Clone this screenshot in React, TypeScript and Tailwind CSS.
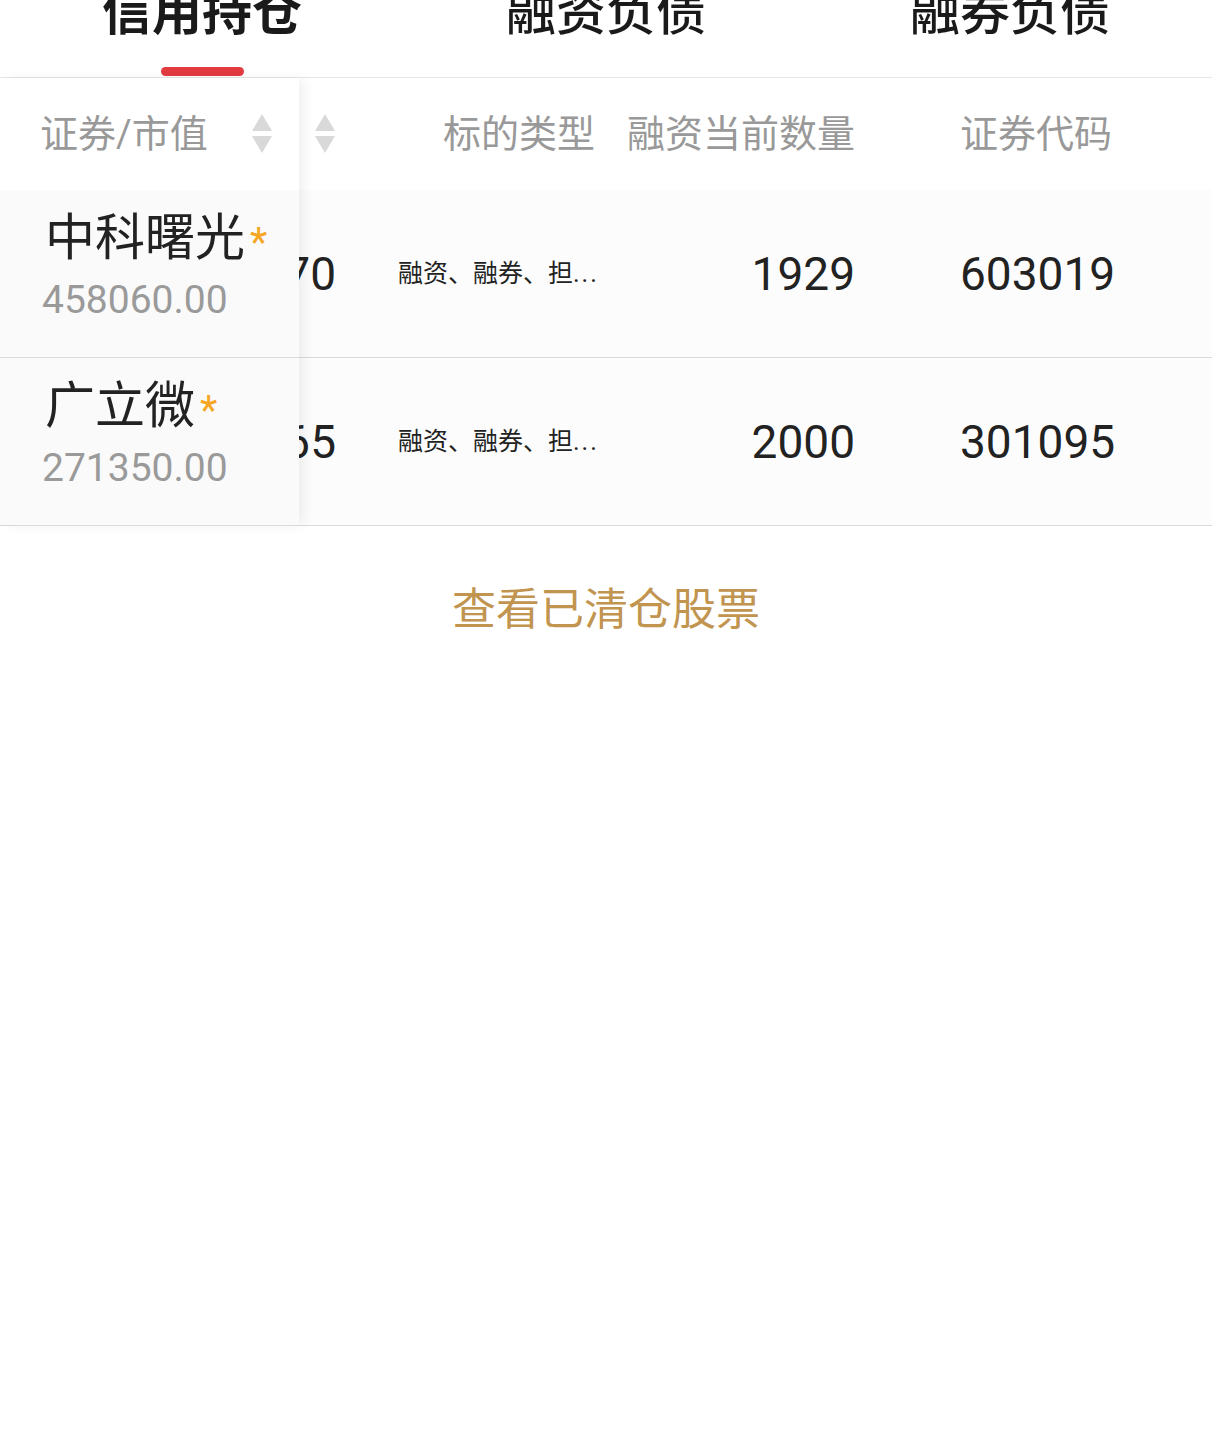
import React from "react";

function SortIcon() {
  return (
    <svg width="22" height="40" viewBox="0 0 22 40" className="shrink-0">
      <path d="M11 0 L21 17 L1 17 Z" fill="#d9d9d9" />
      <path d="M1 22 L21 22 L11 39 Z" fill="#d9d9d9" />
    </svg>
  );
}

const rows = [
  { name: "中科曙光", value: "458060.00", a: "1370", type: "融资、融券、担", qty: "1929", code: "603019" },
  { name: "广立微", value: "271350.00", a: "2665", type: "融资、融券、担", qty: "2000", code: "301095" },
];

export default function App() {
  return (
    <div className="w-[1212px] h-[1430px] bg-white overflow-hidden font-[Roboto,'Noto_Sans_CJK_SC',sans-serif] text-[#222]">
      {/* Tabs */}
      <div className="flex h-[78px] border-b border-[#e6e6e6]">
        <div className="flex-1 flex flex-col items-center justify-between">
          <div className="-mt-[12px] text-[50px] leading-[50px] font-bold text-[#1a1a1a]">信用持仓</div>
          <div className="w-[83px] h-[9px] rounded-full bg-[#e23b40] mb-[1px]" />
        </div>
        <div className="flex-1 flex flex-col items-center">
          <div className="-mt-[12px] text-[50px] leading-[50px] font-medium text-[#1a1a1a]">融资负债</div>
        </div>
        <div className="flex-1 flex flex-col items-center">
          <div className="-mt-[12px] text-[50px] leading-[50px] font-medium text-[#1a1a1a]">融券负债</div>
        </div>
      </div>

      {/* Table */}
      <div className="flex">
        {/* Frozen column */}
        <div className="w-[299px] shrink-0 relative z-10 shadow-[6px_0_12px_-2px_rgba(0,0,0,0.07)]">
          <div className="h-[112px] bg-white flex items-center pl-[40px]">
            <span className="text-[38px] leading-none text-[#999]">证券/市值</span>
            <span className="ml-[43px] flex"><SortIcon /></span>
          </div>
          {rows.map((r) => (
            <div key={r.name} className="h-[168px] bg-[#fafafa] border-b border-[#dadada] pt-[23px] pl-[45px]">
              <div className="flex items-start h-[50px]">
                <span className="text-[50px] leading-[50px] text-[#222]">{r.name}</span>
                <span className="ml-[5px] mt-[20px] text-[40px] leading-[20px] text-[#f5a623]">*</span>
              </div>
              <div className="-ml-[3px] mt-[17px] text-[39px] leading-[40px] text-[#9a9a9a]">{r.value}</div>
            </div>
          ))}
        </div>

        {/* Scrollable area */}
        <div className="flex-1 overflow-hidden">
          <div className="h-[112px] bg-white flex items-center text-[38px] leading-none text-[#999]">
            <div className="w-[37px] flex justify-end"><SortIcon /></div>
            <div className="w-[261px] flex justify-end pr-[2px]">标的类型</div>
            <div className="w-[258px] flex justify-end">融资当前数量</div>
            <div className="flex-1 pl-[105px]">证券代码</div>
          </div>
          {rows.map((r) => (
            <div key={r.code} className="h-[168px] bg-[#fcfcfc] border-b border-[#dadada] flex items-center">
              <div className="w-[37px] overflow-hidden flex justify-end">
                <span className="whitespace-nowrap text-[46px] leading-none text-[#222]">{r.a}</span>
              </div>
              <div className="w-[261px] pl-[62px] whitespace-nowrap text-[25px] leading-none text-[#222]">
                {r.type}
                <span className="tracking-[2px]">...</span>
              </div>
              <div className="w-[258px] flex justify-end text-[46px] leading-none text-[#222]">{r.qty}</div>
              <div className="flex-1 pl-[105px] text-[46px] leading-none text-[#222]">{r.code}</div>
            </div>
          ))}
        </div>
      </div>

      {/* Bottom link */}
      <div className="flex justify-center pt-[62px]">
        <span className="text-[44px] leading-[44px] text-[#c1944f]">查看已清仓股票</span>
      </div>
    </div>
  );
}
